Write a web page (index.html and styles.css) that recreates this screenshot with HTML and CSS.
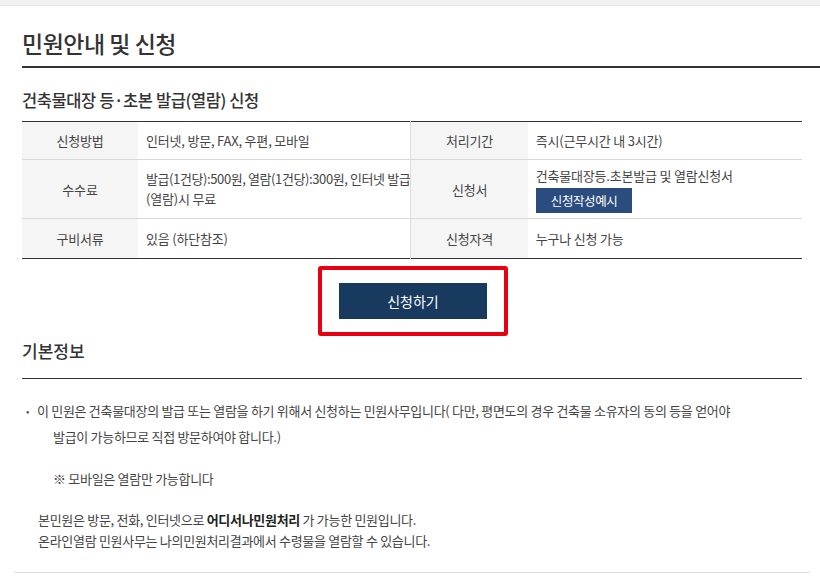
FILE: index.html
```html
<!DOCTYPE html>
<html>
    <head>
        <meta charset="utf-8">
        <title>민원안내 및 신청</title>
        <link rel="stylesheet" href="styles.css">
    </head>
    <body>
        <div class="topbar"></div>
        <div class="page">
            <h1 class="title">민원안내 및 신청</h1>
            <div class="inner">
                <h2 class="subtitle">건축물대장 등·초본 발급(열람) 신청</h2>
                <table class="info">
                    <tr class="r1">
                        <th>신청방법</th>
                        <td>인터넷, 방문, FAX, 우편, 모바일</td>
                        <th class="sep">처리기간</th>
                        <td>즉시(근무시간 내 3시간)</td>
                    </tr>
                    <tr class="r2">
                        <th>수수료</th>
                        <td><span class="nowrap">발급(1건당):500원, 열람(1건당):300원, 인터넷 발급</span><br>(열람)시 무료</td>
                        <th class="sep">신청서</th>
                        <td>건축물대장등.초본발급 및 열람신청서<br><a class="sample" href="#">신청작성예시</a></td>
                    </tr>
                    <tr class="r3">
                        <th>구비서류</th>
                        <td>있음 (하단참조)</td>
                        <th class="sep">신청자격</th>
                        <td>누구나 신청 가능</td>
                    </tr>
                </table>
                <div class="apply-wrap">
                    <div class="highlight">
                        <a class="apply" href="#">신청하기</a>
                    </div>
                </div>
                <h2 class="section">기본정보</h2>
                <div class="basic">
                    <ul class="bullets">
                        <li>이 민원은 건축물대장의 발급 또는 열람을 하기 위해서 신청하는 민원사무입니다( 다만, 평면도의 경우 건축물 소유자의 동의 등을 얻어야<br>발급이 가능하므로 직접 방문하여야 합니다.)</li>
                    </ul>
                    <p class="note">※ 모바일은 열람만 가능합니다</p>
                    <p class="desc">본민원은 방문, 전화, 인터넷으로 <b>어디서나민원처리</b> 가 가능한 민원입니다.<br>온라인열람 민원사무는 나의민원처리결과에서 수령물을 열람할 수 있습니다.</p>
                </div>
            </div>
            <div class="endline"></div>
        </div>
    </body>
</html>
```

FILE: styles.css
```css
*{box-sizing:border-box;}
body,html{
    margin:0;
    width:100%;
    height:100%;
    background:#fff;
    color:#333;
    font-family:"Noto Sans CJK KR","Noto Sans",sans-serif;
    overflow:hidden;
}
.topbar{height:6px; background:#f2f2f2; border-bottom:1px solid #e6e6e6;}
.page{padding-left:22px;}
.title{
    margin:0;
    padding-top:22px;
    height:62px;
    font-size:23px;
    font-weight:500;
    line-height:30px;
    letter-spacing:-0.5px;
    color:#333;
    border-bottom:2px solid #333;
}
.inner{width:780px;}
.subtitle{
    margin:0;
    padding-top:20px;
    height:53px;
    font-size:16.5px;
    font-weight:500;
    line-height:24px;
    letter-spacing:-0.4px;
    color:#333;
}
.info{
    width:780px;
    border-collapse:collapse;
    border-top:1px solid #333;
    border-bottom:1px solid #333;
    font-size:13px;
    color:#444;
    letter-spacing:-0.2px;
}
.info th{
    width:116px;
    background:#f5f5f5;
    font-weight:400;
    color:#444;
    text-align:center;
}
.info td{padding:0 8px; line-height:20px; text-align:left;}
.info td:nth-child(2){width:272px; padding-right:0;}
.info th.sep{width:117px; border-left:1px solid #ddd;}
.info tr + tr{border-top:1px solid #d8d8d8;}
.nowrap{white-space:nowrap; letter-spacing:-0.4px;}
.r1{height:38px;}
.r2{height:59px;}
.r3{height:40px;}
.sample{
    display:inline-block;
    margin-top:2px;
    padding:0 15px;
    height:25px;
    line-height:25px;
    background:#2b4c7e;
    color:#fff;
    font-size:12.5px;
    letter-spacing:-0.4px;
    text-decoration:none;
}
.apply-wrap{display:flex; justify-content:center; padding-top:7px; padding-left:2px;}
.highlight{
    width:190px;
    height:70px;
    border:4px solid #e60012;
    border-radius:3px;
    display:flex;
    align-items:center;
    justify-content:center;
}
.apply{
    width:148px;
    height:36px;
    line-height:36px;
    background:#173a5e;
    color:#fff;
    font-size:14px;
    text-align:center;
    text-decoration:none;
}
.section{
    margin:0;
    padding-top:2px;
    height:43px;
    font-size:17px;
    font-weight:500;
    line-height:26px;
    color:#333;
    border-bottom:1px solid #333;
}
.basic{font-size:13px; color:#444; letter-spacing:-0.3px;}
.bullets{margin:0; padding:19px 0 0 0; list-style:none;}
.bullets li{position:relative; line-height:26px; padding-left:31px; text-indent:-16px;}
.bullets li::before{content:"•"; position:absolute; left:4px; top:0; text-indent:0; color:#555; font-size:10px;}
.note{margin:0; padding:18px 0 0 31px; line-height:22px;}
.desc{margin:0; padding:19px 0 0 16px; line-height:21px;}
.desc b{font-weight:700; color:#222;}
.endline{margin:21px 0 0 -8px; width:796px; height:1px; background:#ddd;}
```
